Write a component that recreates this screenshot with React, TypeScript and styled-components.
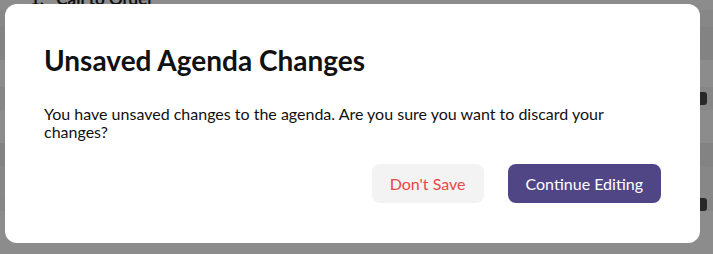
import React from "react";
import styled, { createGlobalStyle } from "styled-components";

const Global = createGlobalStyle`
  html, body { margin: 0; padding: 0; background: #ffffff; }
  body { font-family: Lato, "Noto Sans", sans-serif; overflow: hidden; }
  * { box-sizing: border-box; }
`;

const Page = styled.div`
  width: 713px;
  height: 254px;
  display: flex;
  flex-direction: column;
  background: #ffffff;
`;

const Row = styled.div<{ $h: number; $shade: string }>`
  height: ${(p) => p.$h}px;
  background: ${(p) => p.$shade};
  display: flex;
  align-items: center;
  justify-content: space-between;
  padding: 0 6px 0 30px;
  flex-shrink: 0;
`;

const RowTitle = styled.span`
  font-size: 17px;
  font-weight: 700;
  color: #222;
  margin-top: -14px;
  white-space: pre;
`;

const Badge = styled.span`
  width: 14px;
  height: 13px;
  border-radius: 3px;
  background: #4a4a4a;
  margin-left: auto;
`;

const Overlay = styled.div`
  position: fixed;
  inset: 0;
  background: rgba(0, 0, 0, 0.45);
  display: flex;
  align-items: flex-start;
  padding: 4px 0 0 5px;
`;

const Dialog = styled.div`
  width: 695px;
  background: #ffffff;
  border-radius: 12px;
  padding: 39px 39px 40px 39px;
  display: flex;
  flex-direction: column;
`;

const Title = styled.h2`
  margin: 0;
  font-size: 28px;
  font-weight: 700;
  color: #111;
  line-height: 34px;
`;

const Body = styled.p`
  margin: 28px 0 0;
  font-size: 16px;
  line-height: 18px;
  color: #111;
`;

const Actions = styled.div`
  display: flex;
  justify-content: flex-end;
  gap: 24px;
  margin-top: 23px;
`;

const Button = styled.button<{ $variant: "secondary" | "primary" }>`
  height: 39px;
  border: none;
  border-radius: 8px;
  padding: 0 18px;
  font-family: Lato, "Noto Sans", sans-serif;
  font-size: 16px;
  cursor: pointer;
  background: ${(p) => (p.$variant === "primary" ? "#504686" : "#f3f3f3")};
  color: ${(p) => (p.$variant === "primary" ? "#ffffff" : "#ef4444")};
`;

const rows: { h: number; shade: string; badge?: boolean; title?: string }[] = [
  { h: 10, shade: "#ffffff", title: "1.   Call to Order" },
  { h: 17, shade: "#f6f6f6" },
  { h: 33, shade: "#eeeeee" },
  { h: 27, shade: "#ffffff" },
  { h: 23, shade: "#f4f4f4", badge: true },
  { h: 33, shade: "#ffffff" },
  { h: 24, shade: "#eeeeee" },
  { h: 30, shade: "#f6f6f6" },
  { h: 14, shade: "#f4f4f4", badge: true },
  { h: 43, shade: "#ffffff" },
];

export default function App() {
  return (
    <>
      <Global />
      <Page>
        {rows.map((r, i) => (
          <Row key={i} $h={r.h} $shade={r.shade}>
            {r.title && <RowTitle>{r.title}</RowTitle>}
            {r.badge && <Badge />}
          </Row>
        ))}
      </Page>
      <Overlay>
        <Dialog role="dialog">
          <Title>Unsaved Agenda Changes</Title>
          <Body>
            You have unsaved changes to the agenda. Are you sure you want to discard your changes?
          </Body>
          <Actions>
            <Button $variant="secondary">Don't Save</Button>
            <Button $variant="primary">Continue Editing</Button>
          </Actions>
        </Dialog>
      </Overlay>
    </>
  );
}
